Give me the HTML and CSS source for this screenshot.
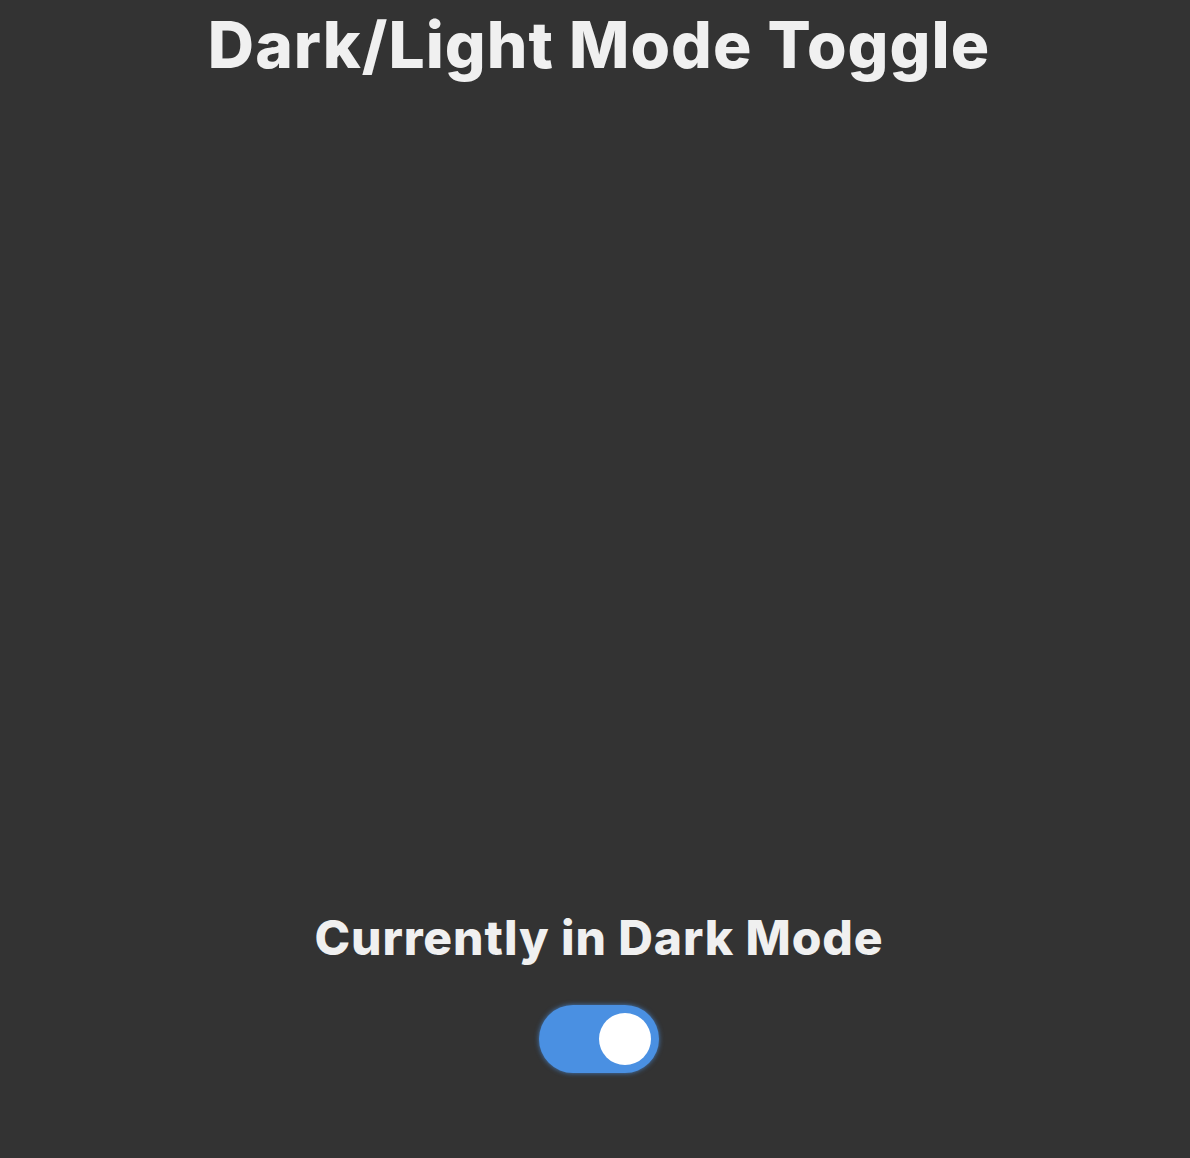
FILE: index.html
```html
<!DOCTYPE html>
<html lang="en">
<head>
<meta charset="utf-8">
<title>Dark/Light Mode Toggle</title>
<link rel="stylesheet" href="styles.css">
</head>
<body>
<main class="page">
  <h1 class="title">Dark/Light Mode Toggle</h1>
  <section class="status">
    <h2 class="status-text">Currently in Dark Mode</h2>
    <button class="toggle" type="button" aria-label="Toggle dark mode"><span class="knob"></span></button>
  </section>
</main>
</body>
</html>
```
FILE: styles.css
```css
html, body {
  margin: 0;
  padding: 0;
  background: #333333;
}
body {
  font-family: Inter, "Noto Sans", sans-serif;
  color: #f0f0f0;
}
.page {
  box-sizing: border-box;
  height: 1158px;
  padding: 0 0 85px 8px;
  display: flex;
  flex-direction: column;
  align-items: center;
  justify-content: space-between;
}
.title {
  margin: 0;
  font-size: 64px;
  font-weight: 800;
  line-height: 90px;
  letter-spacing: 1.05px;
  text-align: center;
}
.status {
  display: flex;
  flex-direction: column;
  align-items: center;
  gap: 38px;
}
.status-text {
  margin: 0;
  font-size: 48px;
  font-weight: 800;
  line-height: 58px;
  letter-spacing: 0.9px;
}
.toggle {
  width: 120px;
  height: 68px;
  padding: 0 8px;
  border: none;
  border-radius: 34px;
  background: #4a90e2;
  box-shadow: 0 0 5px rgba(74, 144, 226, 0.8);
  display: flex;
  align-items: center;
  justify-content: flex-end;
  cursor: pointer;
}
.knob {
  width: 52px;
  height: 52px;
  border-radius: 50%;
  background: #ffffff;
}
```
